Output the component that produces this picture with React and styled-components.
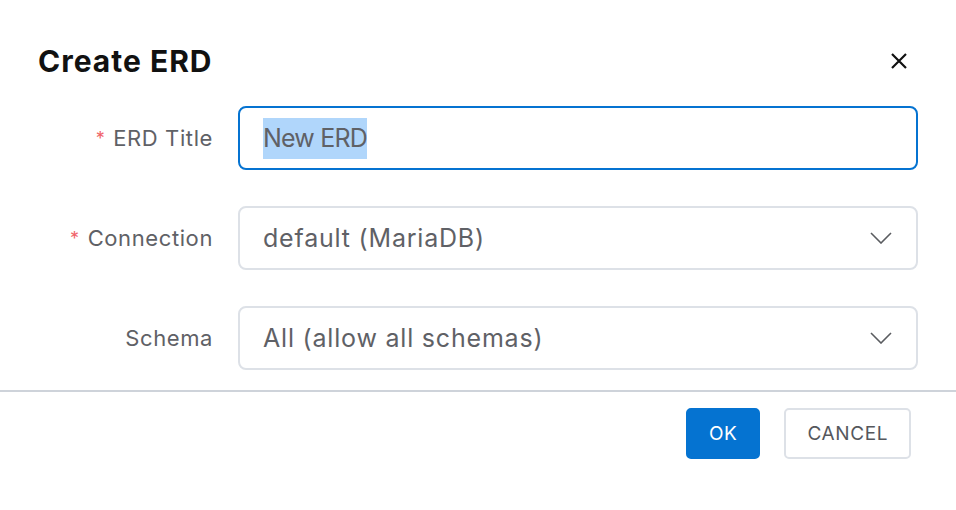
import React from 'react';
import styled, { createGlobalStyle } from 'styled-components';

const GlobalStyle = createGlobalStyle`
  html, body {
    margin: 0;
    padding: 0;
    background: #fff;
  }

  body {
    font-family: Inter, "Noto Sans", "Liberation Sans", sans-serif;
    -webkit-font-smoothing: antialiased;
  }
`;

const Dialog = styled.div`
  width: 956px;
  height: 510px;
  display: flex;
  flex-direction: column;
  background: #fff;
`;

const Header = styled.header`
  display: flex;
  align-items: center;
  justify-content: space-between;
  padding: 42px 48px 0 38px;
  height: 38px;
`;

const Title = styled.h2`
  margin: 0;
  font-size: 30px;
  font-weight: 700;
  color: #111;
  letter-spacing: 1px;
`;

const CloseButton = styled.button`
  border: 0;
  background: none;
  padding: 0;
  width: 18px;
  height: 18px;
  display: flex;
  align-items: center;
  justify-content: center;
  cursor: pointer;
`;

const Form = styled.form`
  display: grid;
  grid-template-columns: 213px 1fr;
  column-gap: 25px;
  row-gap: 36px;
  padding: 26px 38px 20px 0;
`;

const Label = styled.label`
  display: flex;
  align-items: center;
  justify-content: flex-end;
  font-size: 22px;
  letter-spacing: 0.6px;
  color: #5f6166;
`;

const Required = styled.span`
  color: #f0646a;
  margin-right: 8px;
  font-size: 18px;
`;

const Field = styled.div`
  height: 64px;
  box-sizing: border-box;
  display: flex;
  align-items: center;
  justify-content: space-between;
  padding: 0 24px 0 23px;
  border: ${({ focused }) => (focused ? '2px solid #0573d1' : '2px solid #dde1e7')};
  border-radius: 8px;
  font-size: 25px;
  letter-spacing: 0.8px;
  color: #5f6166;
  cursor: ${({ select }) => (select ? 'pointer' : 'text')};
`;

/* text of the focused input, shown fully selected */
const Selected = styled.span`
  background: #b0d6fb;
  line-height: 41px;
  letter-spacing: -0.8px;
  display: inline-block;
`;

const Divider = styled.hr`
  margin: 0;
  border: 0;
  border-top: 2px solid #ced3da;
`;

const Footer = styled.footer`
  display: flex;
  justify-content: flex-end;
  gap: 24px;
  padding: 16px 45px 0 0;
`;

const Button = styled.button`
  height: 51px;
  box-sizing: border-box;
  padding: 0 21px;
  border-radius: 5px;
  font-family: inherit;
  font-size: 19px;
  letter-spacing: 0.6px;
  cursor: pointer;
  border: ${({ primary }) => (primary ? '2px solid #0573d1' : '2px solid #dde1e7')};
  background: ${({ primary }) => (primary ? '#0573d1' : '#fff')};
  color: ${({ primary }) => (primary ? '#fff' : '#55575c')};
`;

function Chevron() {
  return (
    <svg width="22" height="12" viewBox="0 0 22 12" fill="none">
      <path d="M1 1l10 10L21 1" stroke="#5a5c60" strokeWidth="1.6" />
    </svg>
  );
}

function CloseIcon() {
  return (
    <svg width="16" height="16" viewBox="0 0 16 16" fill="none">
      <path d="M1 1l14 14M15 1L1 15" stroke="#111" strokeWidth="2.2" />
    </svg>
  );
}

const fields = [
  { label: 'ERD Title', required: true, value: 'New ERD', focused: true },
  { label: 'Connection', required: true, value: 'default (MariaDB)', select: true },
  { label: 'Schema', value: 'All (allow all schemas)', select: true },
];

export default function App() {
  return (
    <>
      <GlobalStyle />
      <Dialog>
        <Header>
          <Title>Create ERD</Title>
          <CloseButton aria-label="Close">
            <CloseIcon />
          </CloseButton>
        </Header>

        <Form>
          {fields.map((field) => (
            <React.Fragment key={field.label}>
              <Label>
                {field.required && <Required>*</Required>}
                {field.label}
              </Label>
              <Field focused={field.focused} select={field.select}>
                {field.focused ? <Selected>{field.value}</Selected> : <span>{field.value}</span>}
                {field.select && <Chevron />}
              </Field>
            </React.Fragment>
          ))}
        </Form>

        <Divider />

        <Footer>
          <Button primary>OK</Button>
          <Button>CANCEL</Button>
        </Footer>
      </Dialog>
    </>
  );
}
